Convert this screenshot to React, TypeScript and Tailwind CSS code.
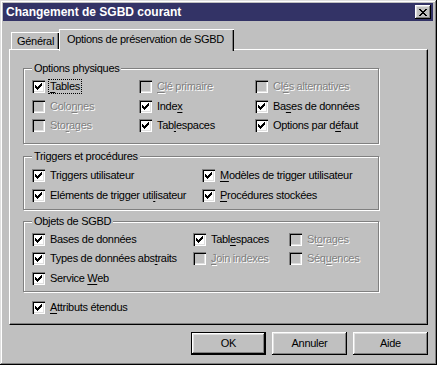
import React from 'react';

type Item = { label: string; u?: number; checked?: boolean; disabled?: boolean; focus?: boolean };

const CHECK_PIXELS: [number, number][] = [
  [6, 0],
  [5, 1], [6, 1],
  [0, 2], [4, 2], [5, 2], [6, 2],
  [0, 3], [1, 3], [3, 3], [4, 3], [5, 3],
  [0, 4], [1, 4], [2, 4], [3, 4], [4, 4],
  [1, 5], [2, 5], [3, 5],
  [2, 6],
];

const Accel: React.FC<{ text: string; u?: number }> = ({ text, u }) => {
  if (u === undefined) return <>{text}</>;
  return (
    <>
      {text.slice(0, u)}
      <span className="underline decoration-1 underline-offset-[2px]">{text[u]}</span>
      {text.slice(u + 1)}
    </>
  );
};

const Box: React.FC<{ checked?: boolean; disabled?: boolean }> = ({ checked, disabled }) => (
  <span
    className={`relative block w-[13px] h-[13px] shrink-0 ${disabled ? 'bg-[#c0c0c0]' : 'bg-white'} shadow-[inset_1px_1px_0_#808080,inset_2px_2px_0_#000,inset_-1px_-1px_0_#fff,inset_-2px_-2px_0_#dfdfdf]`}
  >
    {checked && (
      <svg className="absolute left-[3px] top-[3px]" width="7" height="7" viewBox="0 0 7 7" shapeRendering="crispEdges">
        {CHECK_PIXELS.map(([x, y]) => (
          <rect key={`${x}-${y}`} x={x} y={y} width="1" height="1" fill={disabled ? '#808080' : '#000'} />
        ))}
      </svg>
    )}
  </span>
);

const Check: React.FC<{ item: Item }> = ({ item }) => (
  <div className="flex items-center h-full whitespace-nowrap">
    <Box checked={item.checked} disabled={item.disabled} />
    <span
      className={`ml-[4px] px-[1px] leading-[13px] ${item.focus ? 'outline outline-1 outline-dotted outline-black' : ''} ${
        item.disabled ? 'text-[#808080] [text-shadow:1px_1px_0_#fff]' : 'text-black'
      }`}
    >
      <Accel text={item.label} u={item.u} />
    </span>
  </div>
);

const Group: React.FC<{ title: string; className: string; children: React.ReactNode }> = ({ title, className, children }) => (
  <div className={`relative w-[356px] border border-[#808080] shadow-[1px_1px_0_#fff,inset_1px_1px_0_#fff] pl-[8px] ${className}`}>
    <span className="absolute left-[8px] -top-[7px] px-[2px] bg-[#c0c0c0] leading-[13px] whitespace-nowrap">{title}</span>
    {children}
  </div>
);

const physiques: Item[] = [
  { label: 'Tables', u: 0, checked: true, focus: true },
  { label: 'Clé primaire', u: 0, disabled: true },
  { label: 'Clés alternatives', u: 2, disabled: true },
  { label: 'Colonnes', u: 4, disabled: true },
  { label: 'Index', u: 4, checked: true },
  { label: 'Bases de données', u: 2, checked: true },
  { label: 'Storages', u: 3, disabled: true },
  { label: 'Tablespaces', u: 3, checked: true },
  { label: 'Options par défaut', u: 13, checked: true },
];

const triggers: Item[] = [
  { label: 'Triggers utilisateur', checked: true },
  { label: 'Modèles de trigger utilisateur', u: 0, checked: true },
  { label: 'Eléments de trigger utilisateur', u: 23, checked: true },
  { label: 'Procédures stockées', u: 0, checked: true },
];

const objets: Item[] = [
  { label: 'Bases de données', checked: true },
  { label: 'Tablespaces', u: 4, checked: true },
  { label: 'Storages', u: 2, disabled: true },
  { label: 'Types de données abstraits', u: 20, checked: true },
  { label: 'Join indexes', u: 0, disabled: true },
  { label: 'Séquences', u: 3, disabled: true },
  { label: 'Service Web', u: 8, checked: true },
];

const Button: React.FC<{ label: string; isDefault?: boolean }> = ({ label, isDefault }) => (
  <div className={`w-[75px] h-[23px] ${isDefault ? 'border border-black' : ''}`}>
    <div className="w-full h-full flex items-center justify-center bg-[#c0c0c0] shadow-[inset_-1px_-1px_0_#000,inset_1px_1px_0_#fff,inset_-2px_-2px_0_#808080,inset_2px_2px_0_#dfdfdf]">
      {label}
    </div>
  </div>
);

const App: React.FC = () => {
  return (
    <div className="w-[437px] h-[365px] bg-[#c0c0c0] text-[11px] tracking-[-0.3px] text-black font-['Liberation_Sans',Arial,sans-serif] pt-[3px] pl-[3px] pr-[4px] shadow-[inset_-1px_-1px_0_#000,inset_1px_1px_0_#dfdfdf,inset_-2px_-2px_0_#808080,inset_2px_2px_0_#fff] overflow-hidden">
      {/* Title bar */}
      <div className="h-[18px] bg-[#333366] flex items-center justify-between pl-[3px] pr-[2px]">
        <span className="text-white font-bold text-[12px] tracking-normal">Changement de SGBD courant</span>
        <div className="w-[16px] h-[14px] bg-[#c0c0c0] flex items-center justify-center shadow-[inset_-1px_-1px_0_#000,inset_1px_1px_0_#fff,inset_-2px_-2px_0_#808080,inset_2px_2px_0_#dfdfdf]">
          <svg width="8" height="7" viewBox="0 0 8 7" shapeRendering="crispEdges">
            <path d="M0 0h2v1H0zM6 0h2v1H6zM1 1h2v1H1zM5 1h2v1H5zM2 2h4v1H2zM3 3h2v1H3zM2 4h4v1H2zM1 5h2v1H1zM5 5h2v1H5zM0 6h2v1H0zM6 6h2v1H6z" fill="#000" />
          </svg>
        </div>
      </div>

      {/* Tabs */}
      <div className="mt-[8px] ml-[6px] mr-[5px]">
        <div className="flex items-end h-[20px] pl-[2px]">
          <div className="w-[48px] h-[17px] border-t border-l border-white shadow-[inset_-1px_0_0_#000,inset_-2px_0_0_#808080] flex items-center pl-[5px]">
            Général
          </div>
          <div className="relative z-10 w-[175px] h-[22px] -mb-[2px] bg-[#c0c0c0] border-t border-l border-white shadow-[inset_-1px_0_0_#000,inset_-2px_0_0_#808080] pl-[7px] pt-[3px] leading-[13px]">
            Options de préservation de SGBD
          </div>
        </div>

        {/* Panel */}
        <div className="h-[276px] border-t border-l border-white border-r border-b border-r-black border-b-black shadow-[inset_-1px_-1px_0_#808080] pt-[18px] pl-[13px]">
          <Group title="Options physiques" className="h-[76px] pt-[8px]">
            <div className="grid grid-cols-[107px_116px_1fr] auto-rows-[19.5px]">
              {physiques.map((it) => (
                <Check key={it.label} item={it} />
              ))}
            </div>
          </Group>

          <Group title="Triggers et procédures" className="mt-[12px] h-[54px] pt-[8px]">
            <div className="grid grid-cols-[170px_1fr] auto-rows-[20px]">
              {triggers.map((it) => (
                <Check key={it.label} item={it} />
              ))}
            </div>
          </Group>

          <Group title="Objets de SGBD" className="mt-[11px] h-[71px] pt-[7.5px]">
            <div className="grid grid-cols-[161px_96px_1fr] auto-rows-[19.5px]">
              {objets.map((it) => (
                <Check key={it.label} item={it} />
              ))}
            </div>
          </Group>

          <div className="mt-[5px] h-[20px] pl-[9px]">
            <Check item={{ label: 'Attributs étendus', u: 0, checked: true }} />
          </div>
        </div>
      </div>

      {/* Buttons */}
      <div className="mt-[7px] mr-[5px] flex justify-end gap-[6px]">
        <Button label="OK" isDefault />
        <Button label="Annuler" />
        <Button label="Aide" />
      </div>
    </div>
  );
};

export default App;
